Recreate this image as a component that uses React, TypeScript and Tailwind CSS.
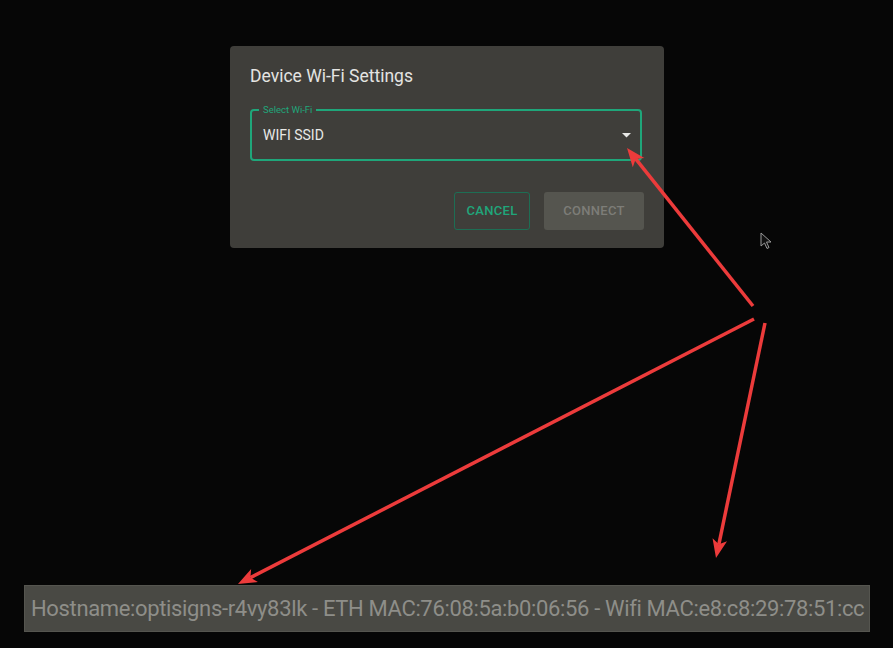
const GREEN = '#1fa67a';

function Annotations() {
  // red call-out arrows drawn over the screenshot
  const arrows = [
    { x1: 753, y1: 306, x2: 627, y2: 148 },
    { x1: 754, y1: 319, x2: 238, y2: 584 },
    { x1: 765, y1: 323, x2: 716, y2: 558 },
  ];
  return (
    <svg className="pointer-events-none absolute inset-0" width="893" height="648">
      {arrows.map((a, i) => {
        const ang = Math.atan2(a.y2 - a.y1, a.x2 - a.x1);
        const len = 20;
        const spread = 0.38;
        const p1 = [a.x2 - len * Math.cos(ang - spread), a.y2 - len * Math.sin(ang - spread)];
        const p2 = [a.x2 - len * Math.cos(ang + spread), a.y2 - len * Math.sin(ang + spread)];
        const back = [a.x2 - 14 * Math.cos(ang), a.y2 - 14 * Math.sin(ang)];
        return (
          <g key={i}>
            <line x1={a.x1} y1={a.y1} x2={back[0]} y2={back[1]} stroke="#ec3b3b" strokeWidth="3.5" />
            <polygon
              points={`${a.x2},${a.y2} ${p1[0]},${p1[1]} ${back[0]},${back[1]} ${p2[0]},${p2[1]}`}
              fill="#ec3b3b"
            />
          </g>
        );
      })}
      {/* mouse pointer */}
      <path
        d="M761 233 L761 246 L764.5 243 L767 248.5 L769 247.5 L766.5 242 L771 242 Z"
        fill="#111"
        stroke="#9a9a9a"
        strokeWidth="1"
      />
    </svg>
  );
}

export default function App() {
  return (
    <div
      className="relative h-[648px] w-[893px] overflow-hidden bg-[#060606]"
      style={{ fontFamily: 'Roboto, "Liberation Sans", sans-serif' }}
    >
      <div className="flex flex-col">
        <div className="ml-[230px] mt-[46px] h-[202px] w-[434px] rounded-[4px] bg-[#3f3e3a] px-5 pt-[18px]">
          <h2 className="text-[17.5px] leading-6 text-[#e4e4e2]">Device Wi-Fi Settings</h2>

          <div className="relative mt-[21px] flex h-[52px] w-[392px] items-center rounded-[4px] border-2 border-[#1fa67a] pl-[11px] pr-[9px]">
            <span className="absolute -top-[8px] left-[7px] bg-[#3f3e3a] px-[4px] text-[9.5px] leading-[14px] text-[#1fa67a]">
              Select Wi-Fi
            </span>
            <span className="flex-1 text-[14px] text-[#e8e8e6]">WIFI SSID</span>
            <svg width="9" height="5" viewBox="0 0 9 5">
              <path d="M0 0 L9 0 L4.5 4.5 Z" fill="#e8e8e6" />
            </svg>
          </div>

          <div className="mt-[31px] flex justify-end gap-[14px]">
            <button
              type="button"
              className="h-[38px] w-[76px] rounded-[3px] border border-[#1d6e54] text-[13px] font-medium tracking-wide"
              style={{ color: GREEN }}
            >
              CANCEL
            </button>
            <button
              type="button"
              className="h-[38px] w-[100px] rounded-[3px] bg-[#55554f] text-[13px] font-medium tracking-wide text-[#7d7d78]"
            >
              CONNECT
            </button>
          </div>
        </div>

        <div className="ml-[24px] mt-[337px] flex h-[47px] w-[846px] items-center border border-[#55554f] bg-[#494944] pl-[6px]">
          <span className="whitespace-nowrap text-[22px] tracking-[-0.35px] text-[#8e8e89]">
            Hostname:optisigns-r4vy83lk - ETH MAC:76:08:5a:b0:06:56 - Wifi MAC:e8:c8:29:78:51:cc
          </span>
        </div>
      </div>

      <Annotations />
    </div>
  );
}
